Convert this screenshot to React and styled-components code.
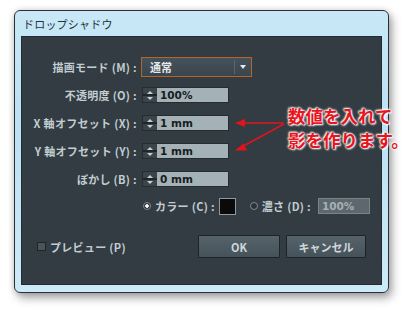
import React from 'react';
import styled, { createGlobalStyle } from 'styled-components';

const GlobalStyle = createGlobalStyle`
  html, body {
    margin: 0;
    padding: 0;
    background: #ffffff;
  }
  body {
    font-family: "Noto Sans CJK JP", "Noto Sans", sans-serif;
  }
`;

const Page = styled.div`
  position: relative;
  width: 411px;
  height: 310px;
  box-sizing: border-box;
  padding: 10px 0 0 14px;
  background: #ffffff;
  overflow: hidden;
`;

const Window = styled.div`
  width: 375px;
  height: 283px;
  box-sizing: border-box;
  border: 1px solid #283035;
  border-radius: 6px;
  background: linear-gradient(180deg, #c8e8f7 0%, #bce1f3 40%, #cdeaf8 100%);
  padding: 0 6px 7px 6px;
  box-shadow: 3px 5px 10px rgba(0, 0, 0, 0.35), 0 0 6px rgba(0, 0, 0, 0.15);
  display: flex;
  flex-direction: column;
`;

const TitleBar = styled.div`
  height: 25px;
  display: flex;
  align-items: center;
  padding-left: 2px;
  font-size: 11px;
  color: #24323b;
  letter-spacing: 0.2px;
`;

const Panel = styled.div`
  flex: 1;
  box-sizing: border-box;
  background: #323c42;
  border: 1px solid #242b2f;
  padding-top: 16px;
  display: flex;
  flex-direction: column;
`;

const Form = styled.div`
  display: grid;
  grid-template-columns: 115px auto;
  grid-auto-rows: 28px;
  column-gap: 4px;
  align-items: center;
`;

const Label = styled.div`
  text-align: right;
  font-size: 11px;
  font-weight: bold;
  letter-spacing: 0.3px;
  color: #c3ccd1;
  white-space: nowrap;
`;

const Select = styled.div`
  width: 111px;
  height: 20px;
  box-sizing: border-box;
  border: 1px solid #b4642c;
  background: linear-gradient(180deg, #46525a 0%, #3a454b 100%);
  display: flex;
  align-items: center;
`;

const SelectValue = styled.span`
  flex: 1;
  padding-left: 8px;
  font-size: 11px;
  font-weight: bold;
  color: #e2e8eb;
`;

const SelectArrow = styled.span`
  width: 16px;
  height: 14px;
  border-left: 1px solid #5b666c;
  display: flex;
  align-items: center;
  justify-content: center;
  &::after {
    content: '';
    border-left: 3.5px solid transparent;
    border-right: 3.5px solid transparent;
    border-top: 4px solid #e6ecef;
  }
`;

const Spin = styled.div`
  margin-left: 1px;
  width: 87px;
  height: 16px;
  display: flex;
  box-sizing: border-box;
  border: 1px solid #242c30;
`;

const Stepper = styled.span`
  width: 14px;
  background: linear-gradient(180deg, #3a444a 0 45%, #1f262a 45% 55%, #3a444a 55% 100%);
  display: flex;
  flex-direction: column;
  align-items: center;
  justify-content: center;
  gap: 3px;
  &::before, &::after {
    content: '';
    border-left: 3px solid transparent;
    border-right: 3px solid transparent;
  }
  &::before {
    border-bottom: 3px solid #c6cfd3;
  }
  &::after {
    border-top: 3px solid #c6cfd3;
  }
`;

const Field = styled.span`
  flex: 1;
  background: ${(p) => (p.$disabled ? '#5c686e' : '#a4b1b6')};
  color: ${(p) => (p.$disabled ? '#a6b0b4' : '#161d21')};
  font-size: 10.5px;
  font-weight: bold;
  line-height: 14px;
  padding-left: 3px;
  font-family: "DejaVu Sans", "Noto Sans CJK JP", sans-serif;
`;

const ColorRow = styled.div`
  height: 26px;
  display: flex;
  align-items: center;
  padding-left: 121px;
  gap: 4px;
`;

const Radio = styled.span`
  width: 8px;
  height: 8px;
  border-radius: 50%;
  box-sizing: border-box;
  border: 1px solid #7f8b91;
  background: ${(p) => (p.$checked ? 'radial-gradient(circle, #ffffff 0 1.5px, #2a3236 2px)' : '#2a3236')};
`;

const Swatch = styled.span`
  width: 17px;
  height: 17px;
  box-sizing: border-box;
  border: 1px solid #8e989d;
  background: #0a0a0a;
  margin-right: 10px;
`;

const SmallField = styled.span`
  margin-left: 3px;
  width: 52px;
  height: 16px;
  box-sizing: border-box;
  border: 1px solid #798489;
  display: flex;
`;

const Footer = styled.div`
  margin-top: 16px;
  display: flex;
  align-items: center;
  padding: 0 15px;
`;

const Check = styled.label`
  flex: 1;
  display: flex;
  align-items: center;
  gap: 4px;
  font-size: 11px;
  font-weight: bold;
  letter-spacing: 0.3px;
  color: #c3ccd1;
  &::before {
    content: '';
    width: 9px;
    height: 9px;
    box-sizing: border-box;
    border: 1px solid #1f2629;
    background: #4a555b;
  }
`;

const Button = styled.button`
  width: ${(p) => p.$w}px;
  height: 23px;
  margin-left: ${(p) => p.$gap || 0}px;
  border: 1px solid #1d2427;
  border-radius: 1px;
  background: linear-gradient(180deg, #56636a 0%, #46525a 100%);
  color: #cfd8dc;
  font-family: inherit;
  font-size: 11px;
  font-weight: bold;
  padding: 0;
`;

const Callout = styled.div`
  position: absolute;
  left: 288px;
  top: 104px;
  font-size: 17.5px;
  font-weight: bold;
  line-height: 24px;
  color: #e8141e;
  white-space: nowrap;
  text-shadow: 0 0 2px #fff, 0 0 2px #fff, 1px 1px 2px #fff, -1px -1px 2px #fff;
`;

const Overlay = styled.svg`
  position: absolute;
  left: 0;
  top: 0;
  pointer-events: none;
`;

const Spinner = ({ value }) => (
  <Spin>
    <Stepper />
    <Field>{value}</Field>
  </Spin>
);

const rows = [
  { label: '不透明度 (O) :', value: '100%' },
  { label: 'X 軸オフセット (X) :', value: '1 mm' },
  { label: 'Y 軸オフセット (Y) :', value: '1 mm' },
  { label: 'ぼかし (B) :', value: '0 mm' },
];

export default function App() {
  return (
    <>
      <GlobalStyle />
      <Page>
        <Window>
          <TitleBar>ドロップシャドウ</TitleBar>
          <Panel>
            <Form>
              <Label>描画モード (M) :</Label>
              <Select>
                <SelectValue>通常</SelectValue>
                <SelectArrow />
              </Select>
              {rows.map((r) => (
                <React.Fragment key={r.label}>
                  <Label>{r.label}</Label>
                  <Spinner value={r.value} />
                </React.Fragment>
              ))}
            </Form>
            <ColorRow>
              <Radio $checked />
              <Label>カラー (C) :</Label>
              <Swatch />
              <Radio />
              <Label>濃さ (D) :</Label>
              <SmallField>
                <Field $disabled>100%</Field>
              </SmallField>
            </ColorRow>
            <Footer>
              <Check>プレビュー (P)</Check>
              <Button $w={82}>OK</Button>
              <Button $w={80} $gap={6}>キャンセル</Button>
            </Footer>
          </Panel>
        </Window>
        <Callout>
          数値を入れて
          <br />
          影を作ります。
        </Callout>
        <Overlay width="411" height="310" viewBox="0 0 411 310">
          <g stroke="#e0141c" strokeWidth="1.6" fill="none">
            <line x1="284" y1="123" x2="238" y2="123" />
            <line x1="284" y1="124" x2="238" y2="149" />
          </g>
          <g fill="#e0141c">
            <polygon points="235,123 245,119 245,127" />
            <polygon points="235,150.5 243.5,143.5 247,150.5" />
          </g>
        </Overlay>
      </Page>
    </>
  );
}
